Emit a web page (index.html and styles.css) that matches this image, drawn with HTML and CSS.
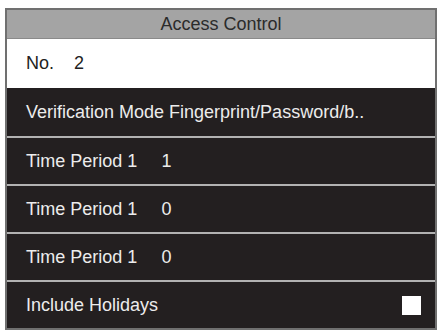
FILE: index.html
```html
<!DOCTYPE html>
<html>
<head>
<meta charset="utf-8">
<link rel="stylesheet" href="styles.css">
</head>
<body>
<div class="panel">
  <div class="title">Access Control</div>
  <div class="row light"><span class="label">No.</span><span class="val val-no">2</span></div>
  <div class="row dark first"><span class="label">Verification Mode Fingerprint/Password/b..</span></div>
  <div class="row dark"><span class="label">Time Period 1</span><span class="val">1</span></div>
  <div class="row dark"><span class="label">Time Period 1</span><span class="val">0</span></div>
  <div class="row dark"><span class="label">Time Period 1</span><span class="val">0</span></div>
  <div class="row dark"><span class="label">Include Holidays</span><span class="check"></span></div>
</div>
</body>
</html>
```
FILE: styles.css
```css
html, body {
  margin: 0;
  padding: 0;
  background: #ffffff;
}
body {
  padding: 8px 3px 0 5px;
  font-family: "Liberation Sans", Arial, sans-serif;
}
.panel {
  width: 428px;
  border: 2px solid #707070;
  background: #231f20;
  display: flex;
  flex-direction: column;
}
.title {
  height: 28px;
  background: #a4a4a4;
  color: #2b2b2b;
  font-size: 18px;
  display: flex;
  align-items: center;
  justify-content: center;
  border-bottom: 1px solid #8a8a8a;
}
.row {
  display: flex;
  align-items: center;
  padding: 0 19px 0 19px;
  font-size: 18px;
}
.light {
  height: 49px;
  background: #ffffff;
  color: #222222;
}
.dark {
  height: 46px;
  color: #ececec;
  border-top: 2px solid #b2b2b2;
}
.dark.first {
  border-top: none;
  height: 48px;
}
.val {
  margin-left: 24px;
}
.val-no {
  margin-left: 20px;
}
.check {
  margin-left: auto;
  width: 19px;
  height: 19px;
  background: #ffffff;
  margin-right: -5px;
}
```
